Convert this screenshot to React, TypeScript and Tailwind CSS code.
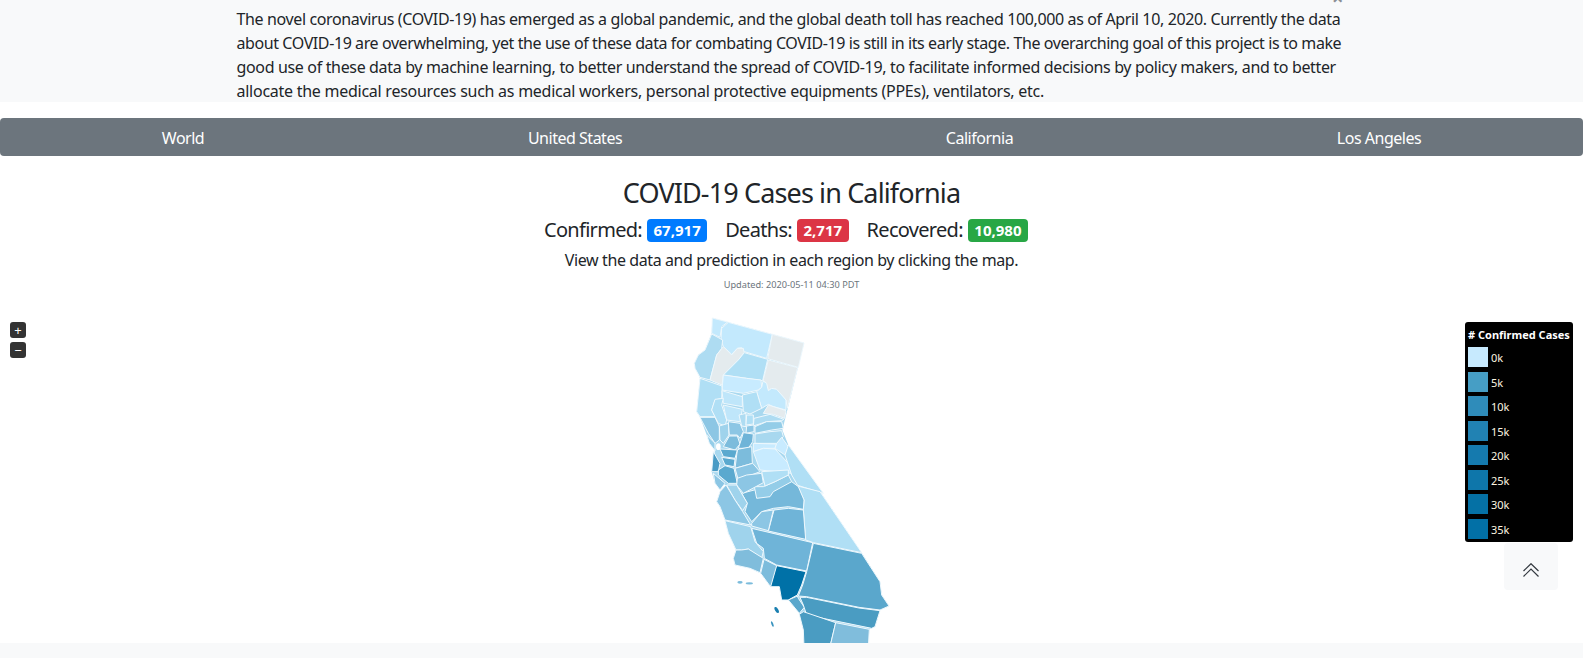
import React from "react";

const font = { fontFamily: '"Noto Sans", "Open Sans", sans-serif' };

type C = [string, string];
const outline =
  "157,54 432,129 367,390 385,435 605,758 660,845 665,885 687,918 660,930 645,980 635,985 628,988 625,1040 432,1040 430,990 418,940 385,900 365,900 358,860 332,860 302,820 270,805 225,795 220,775 228,750 205,700 195,660 180,620 170,605 180,575 198,555 165,550 155,515 165,450 140,405 120,350 110,335 115,285 120,235 103,190 115,165 135,150 155,100";
const top: C[] = [
  ["#c3e9fd", "157,54 203,66 185,80 180,112 155,100"],
  ["#c3e9fd", "205,67 337,103 320,175 253,155 245,143 232,145 215,163 190,140 183,118 185,85"],
  ["#e4ebee", "337,103 432,129 415,202 323,176"],
  ["#e4ebee", "325,180 413,203 382,325 378,300 350,268 335,265 325,272 318,248 309,242"],
  ["#aedcf2", "155,102 188,120 185,145 170,165 150,240 120,232 105,205 103,190 115,165 135,150"],
  ["#e4ebee", "190,140 215,165 232,145 250,145 252,157 235,180 190,225 186,255 150,240 170,165"],
  ["#b0dff5", "253,158 323,178 308,242 260,235 190,225 235,180"],
  ["#c8ebff", "190,225 260,235 303,240 305,262 295,270 250,280 186,270"],
  ["#c3e9fd", "309,243 320,250 325,272 335,265 350,268 378,300 378,330 340,320 325,313 305,325 290,275 305,262"],
  ["#e4ebee", "325,315 378,332 374,355 340,343 310,340"],
  ["#b0dff5", "120,235 186,258 186,270 185,295 165,300 155,330 165,350 120,350 110,335 115,285"],
  ["#bfe6fa", "186,272 247,290 247,320 190,310"],
  ["#b0dff5", "247,285 290,275 305,325 270,342 250,335"],
  ["#b0dff5", "165,298 190,295 185,315 200,360 195,378 175,370 155,330"],
  ["#bfe6fa", "190,315 247,328 240,365 200,360"],
  ["#aedcf2", "237,345 258,340 258,380 245,378"],
  ["#b0dff5", "260,345 280,345 280,372 258,375"],
  ["#aedcf2", "282,355 330,343 372,358 365,362 320,365 280,378"],
  ["#94cde8", "285,380 320,365 365,365 370,385 335,390 285,400"],
  ["#a8d8ef", "285,402 330,395 365,392 370,410 350,430 285,430"],
  ["#8cc6e4", "120,352 165,352 178,380 178,420 165,430 145,400"],
  ["#94cde8", "140,405 165,430 165,452 148,430"],
  ["#9fd3ec", "178,378 205,370 207,405 190,430 180,420"],
  ["#8cc6e4", "205,365 240,370 250,395 240,415 232,405 208,405"],
  ["#7cbcdc", "208,408 232,408 240,432 225,450 190,440"],
  ["#8cc6e4", "260,378 282,375 282,395 258,400"],
  ["#6fb4d8", "250,398 280,402 278,425 265,445 235,445 245,415"],
  ["#7cbcdc", "238,447 275,440 277,490 225,505 232,450"],
  ["#5aa9cf", "180,447 232,450 225,475 190,470"],
  ["#5aa9cf", "185,472 225,478 222,500 195,495"],
  ["#4a9cc6", "160,455 180,490 175,515 155,515"],
  ["#5aa9cf", "175,510 195,497 222,505 232,550 205,550 175,525"],
  ["#8cc6e4", "225,505 278,490 300,515 235,540"],
  ["#c8ebff", "280,430 350,432 345,445 310,445 280,455"],
  ["#c8ebff", "280,455 310,445 345,447 385,490 395,520 300,510"],
  ["#c8ebff", "350,430 365,412 385,440 375,465 345,445"],
  ["#b0dff5", "385,435 490,580 413,556 395,525 375,465"],
];
const bottom: C[] = [
  ["#b0dff5", "413,48 480,65 605,248 460,218 437,210 430,120 432,90"],
  ["#6fb4d8", "325,183 342,120 385,115 430,120 437,208"],
  ["#75b8da", "283,60 340,50 395,35 415,50 432,90 430,118 385,110 340,115 305,125 275,155 255,125 262,100 245,70"],
  ["#94cde8", "283,50 310,50 345,35 385,15 395,35 340,65 330,80 290,85"],
  ["#8cc6e4", "230,45 250,70 310,38 305,10 260,15 232,25"],
  ["#b0dff5", "305,5 385,0 385,15 345,35 315,48"],
  ["#9fd3ec", "200,45 230,45 262,100 248,122 225,90"],
  ["#8cc6e4", "170,95 180,65 198,45 225,90 248,125 272,165 195,150 180,110"],
  ["#8cc6e4", "275,160 305,125 340,120 325,182 275,168"],
  ["#8cc6e4", "160,10 195,40 180,60 165,40"],
  ["#9fd3ec", "195,152 272,170 285,215 310,245 305,265 265,237 245,240 228,240 205,190"],
  ["#80bddc", "228,240 245,240 265,237 310,265 300,308 270,295 225,285 220,265"],
  ["#6fb4d8", "275,175 458,218 440,303 350,285 313,265 310,235 290,220"],
  ["#7cbcdc", "312,268 350,287 355,330 358,345 330,348 302,310"],
  ["#0071a7", "350,287 438,305 425,345 412,375 385,390 365,390 358,350 332,350"],
  ["#5aa7cc", "460,220 605,250 660,335 665,375 687,408 660,420 597,412 440,380 415,378 428,345 440,305"],
  ["#5aa7cc", "412,378 415,385 433,412 418,430 385,390"],
  ["#4a9cc2", "420,382 440,382 597,414 660,422 645,470 635,475 440,435 430,405"],
  ["#4a9cc2", "418,433 430,425 527,458 510,530 432,530 430,480"],
  ["#80bddc", "527,458 628,478 625,530 510,530"],
];

const legend: [string, string][] = [
  ["#c7eafe", "0k"],
  ["#469ec5", "5k"],
  ["#2f8cba", "10k"],
  ["#2182b3", "15k"],
  ["#157aae", "20k"],
  ["#0e76aa", "25k"],
  ["#0571a5", "30k"],
  ["#0270a6", "35k"],
];

const nav = ["World", "United States", "California", "Los Angeles"];

function CaliforniaMap() {
  return (
    <svg width="260" height="358" viewBox="0 0 780 1074" className="block">
      <polygon points={outline} fill="#a8d8ef" />
      <g stroke="#eef8fd" strokeWidth="3" strokeLinejoin="round">
        {top.map(([c, p], i) => (
          <polygon key={i} fill={c} points={p} />
        ))}
        <ellipse cx="175" cy="440" rx="7" ry="10" fill="#ffffff" stroke="none" />
        <g transform="translate(0,510)">
          {bottom.map(([c, p], i) => (
            <polygon key={i} fill={c} points={p} />
          ))}
          <ellipse cx="240" cy="337" rx="8" ry="4" fill="#7cbcdc" stroke="none" />
          <ellipse cx="268" cy="340" rx="11" ry="3.5" fill="#7cbcdc" stroke="none" />
          <ellipse cx="350" cy="420" rx="5" ry="10" fill="#1a7fb0" stroke="none" transform="rotate(-30 350 420)" />
          <ellipse cx="337" cy="462" rx="3" ry="9" fill="#3a94bf" stroke="none" transform="rotate(-20 337 462)" />
        </g>
      </g>
    </svg>
  );
}

export default function App() {
  return (
    <div style={font} className="relative h-[658px] overflow-hidden bg-white text-[#212529] text-base">
      <header className="relative h-[102px] bg-[#f8f9fa] overflow-hidden">
        <div className="mx-auto w-[1140px] px-[15px] pt-[7px]">
          <p className="whitespace-nowrap leading-6">
            <span className="block tracking-[-0.37px]">
              The novel coronavirus (COVID-19) has emerged as a global pandemic, and the global death toll has reached 100,000 as of April 10, 2020. Currently the data
            </span>
            <span className="block tracking-[-0.41px]">
              about COVID-19 are overwhelming, yet the use of these data for combating COVID-19 is still in its early stage. The overarching goal of this project is to make
            </span>
            <span className="block tracking-[-0.344px]">
              good use of these data by machine learning, to better understand the spread of COVID-19, to facilitate informed decisions by policy makers, and to better
            </span>
            <span className="block tracking-[-0.258px]">
              allocate the medical resources such as medical workers, personal protective equipments (PPEs), ventilators, etc.
            </span>
          </p>
        </div>
        <span className="absolute left-[1332px] top-[-12px] text-[20px] leading-5 font-bold text-[#8a8f94]">×</span>
      </header>

      <nav className="mt-4 flex h-[38px] items-center rounded-[4px] bg-[#6c757d] pt-[2px] text-white">
        {nav.map((n) => (
          <a key={n} className="flex-auto px-4 text-center tracking-[-0.03em]">
            {n}
          </a>
        ))}
      </nav>

      <main className="h-[487px] overflow-hidden flex flex-col items-center">
        <h3 className="mt-5 text-[27px] leading-[34px] tracking-[-0.87px]">COVID-19 Cases in California</h3>
        <div className="mt-2 mr-[11px] flex h-6 items-center text-[20px] tracking-[-0.7px]">
          <span>Confirmed:</span>
          <span className="ml-[5px] rounded-[4px] bg-[#007bff] px-[6.5px] text-[15px] leading-[23px] font-bold text-white tracking-normal">67,917</span>
          <span className="ml-[18px]">Deaths:</span>
          <span className="ml-[5px] rounded-[4px] bg-[#dc3545] px-[6.5px] text-[15px] leading-[23px] font-bold text-white tracking-normal">2,717</span>
          <span className="ml-[18px]">Recovered:</span>
          <span className="ml-[5px] rounded-[4px] bg-[#28a745] px-[6.5px] text-[15px] leading-[23px] font-bold text-white tracking-normal">10,980</span>
        </div>
        <p className="mt-[6px] leading-6 tracking-[-0.025em]">View the data and prediction in each region by clicking the map.</p>
        <p className="mt-[6px] text-[9.2px] leading-[14px] text-[#6c757d]">Updated: 2020-05-11 04:30 PDT</p>
        <div className="mt-2 mr-[3px]">
          <CaliforniaMap />
        </div>
      </main>

      <footer className="h-[15px] bg-[#f8f9fa]" />

      <div className="absolute left-[10px] top-[322px] flex flex-col gap-1">
        {["+", "−"].map((s) => (
          <div key={s} className="flex h-4 w-4 items-center justify-center rounded-[3px] bg-[#333333] text-[13px] leading-none text-white">
            {s}
          </div>
        ))}
      </div>

      <aside className="absolute left-[1465px] top-[322px] h-[220px] w-[108px] rounded-[3px] bg-black px-[3px] pt-[5px] text-white">
        <div className="whitespace-nowrap text-[11px] leading-[16px] font-bold">
          # Confirmed Cases
        </div>
        <ul className="mt-[4px] flex flex-col">
          {legend.map(([c, l]) => (
            <li key={l} className="flex h-[24.5px] items-start gap-[3px] text-[11px] leading-[22px] text-[#fdf5e0]">
              <span className="block h-5 w-5" style={{ background: c }} />
              {l}
            </li>
          ))}
        </ul>
      </aside>

      <button className="absolute left-[1504px] top-[543px] flex h-[47px] w-[54px] items-center justify-center rounded-[4px] bg-[#f8f9fa]">
        <svg width="16" height="14" viewBox="0 0 16 14" fill="none" stroke="#343a40" strokeWidth="1.2" className="mt-[6px]">
          <path d="M.5 8 8 .7 15.5 8" />
          <path d="M.5 13.5 8 6 15.5 13.5" />
        </svg>
      </button>
    </div>
  );
}
